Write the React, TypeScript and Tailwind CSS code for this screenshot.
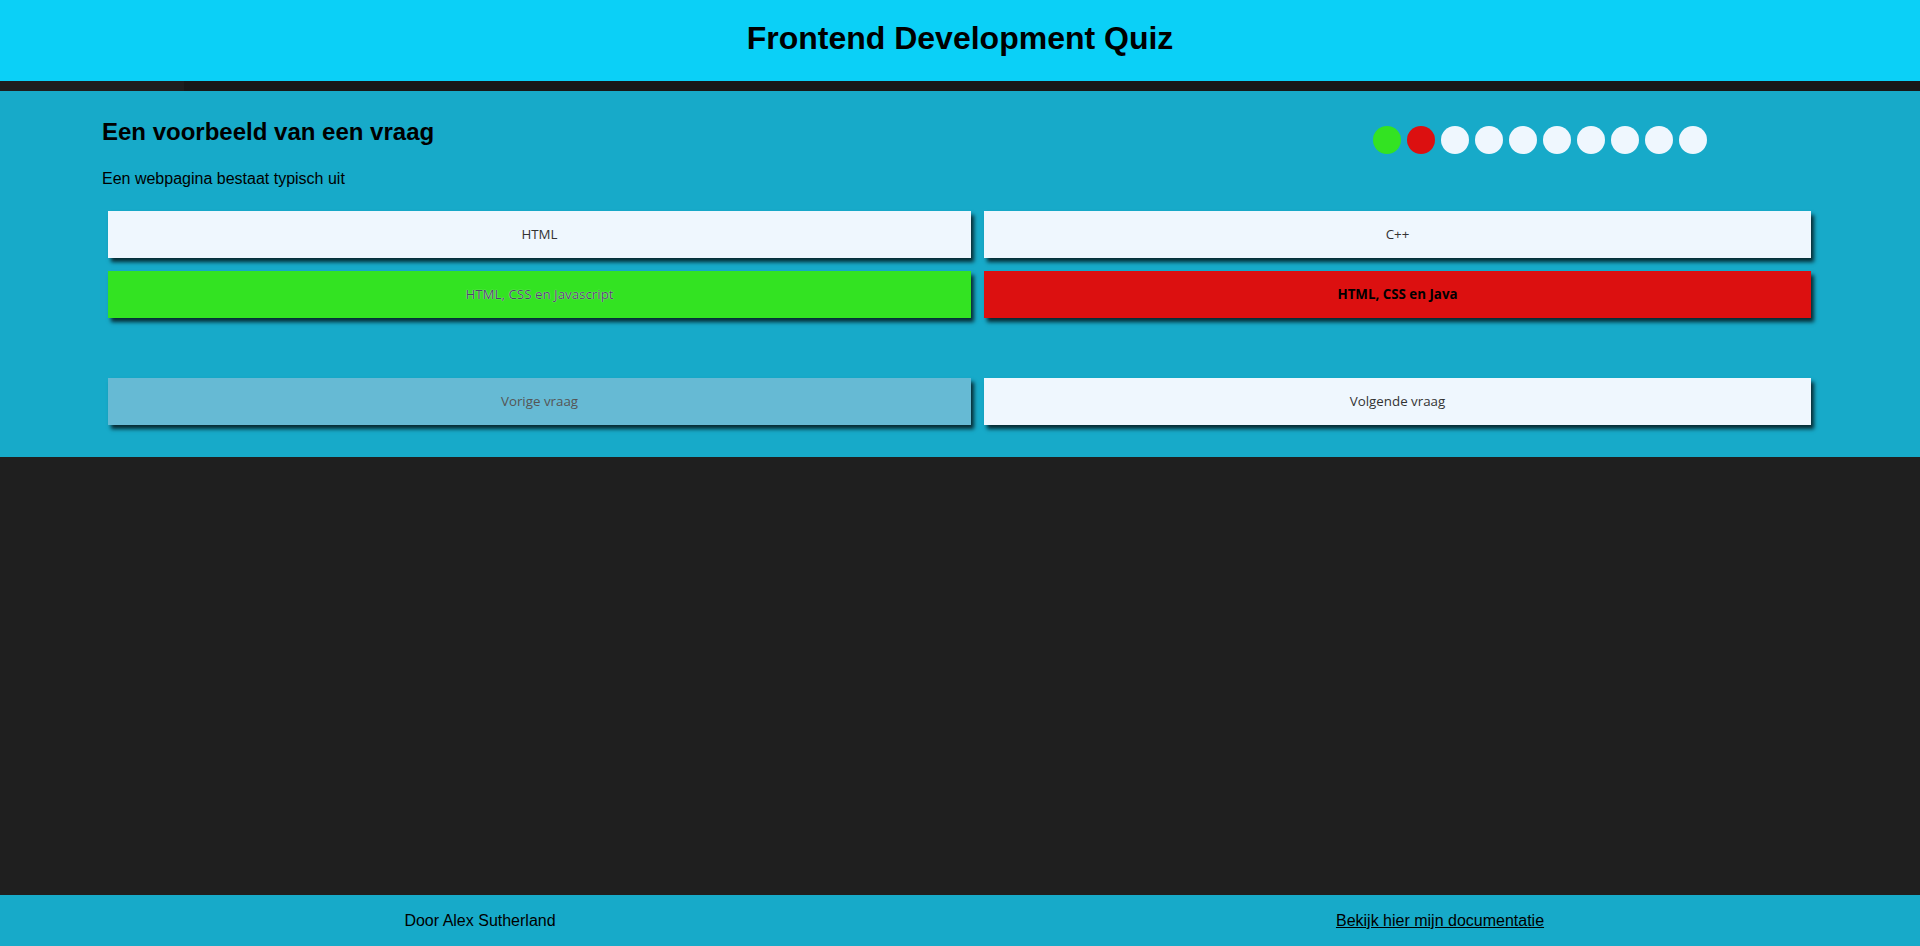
import React from "react";

const dots = ["bg-[#33e322]", "bg-[#dc1010]", "bg-[#eff7fe]", "bg-[#eff7fe]", "bg-[#eff7fe]", "bg-[#eff7fe]", "bg-[#eff7fe]", "bg-[#eff7fe]", "bg-[#eff7fe]", "bg-[#eff7fe]"];

const btn =
  "h-[47px] flex items-center justify-center text-[13.33px] shadow-[3px_4px_4px_rgba(0,0,0,0.75)] font-['Open_Sans','Noto_Sans',sans-serif]";

export default function App() {
  return (
    <div className="min-h-[946px] bg-[#1f1f1f] flex flex-col font-['Liberation_Sans',Arial,sans-serif] text-black">
      <header className="h-[81px] bg-[#0bd0f7] flex items-center justify-center pb-[6px]">
        <h1 className="text-[32px] font-bold leading-none">Frontend Development Quiz</h1>
      </header>
      <div className="h-[10px] bg-[#181818] flex">
        <div className="w-[184px] bg-[#1e1e1e]" />
      </div>
      <main className="bg-[#17aac9] h-[366px] flex flex-col">
        <div className="flex justify-between pl-[102px] pr-[213px] pt-[27px]">
          <div className="flex flex-col">
            <h2 className="text-[24px] font-bold leading-[28px]">Een voorbeeld van een vraag</h2>
            <p className="text-[16px] mt-[24px] leading-[18px]">Een webpagina bestaat typisch uit</p>
          </div>
          <div className="flex gap-[6px] pt-[8px]">
            {dots.map((c, i) => (
              <div key={i} className={`w-[28px] h-[28px] rounded-full ${c}`} />
            ))}
          </div>
        </div>
        <div className="grid grid-cols-[863px_827px] gap-x-[13px] gap-y-[13px] pl-[108px] mt-[23px]">
          <div className={`${btn} bg-[#eff7fe] text-[#333] pt-[1px]`}>HTML</div>
          <div className={`${btn} bg-[#eff7fe] text-[#333] pt-[1px]`}>C++</div>
          <div className={`${btn} bg-[#33e322] text-[#4a4a66] pt-[1px] [text-shadow:0_0_1px_#ffffff]`}>HTML, CSS en Javascript</div>
          <div className={`${btn} bg-[#dc1010] text-black font-bold pt-[1px]`}>HTML, CSS en Java</div>
        </div>
        <div className="grid grid-cols-[863px_827px] gap-x-[13px] pl-[108px] mt-[60px]">
          <div className={`${btn} bg-[#66bad4] text-[#555] pt-[1px]`}>Vorige vraag</div>
          <div className={`${btn} bg-[#eff7fe] text-[#333] pt-[1px]`}>Volgende vraag</div>
        </div>
      </main>
      <div className="flex-1" />
      <footer className="h-[51px] bg-[#17aac9] grid grid-cols-2 items-center text-[16px]">
        <div className="text-center">Door Alex Sutherland</div>
        <div className="text-center">
          <a href="#" className="underline text-black">Bekijk hier mijn documentatie</a>
        </div>
      </footer>
    </div>
  );
}
